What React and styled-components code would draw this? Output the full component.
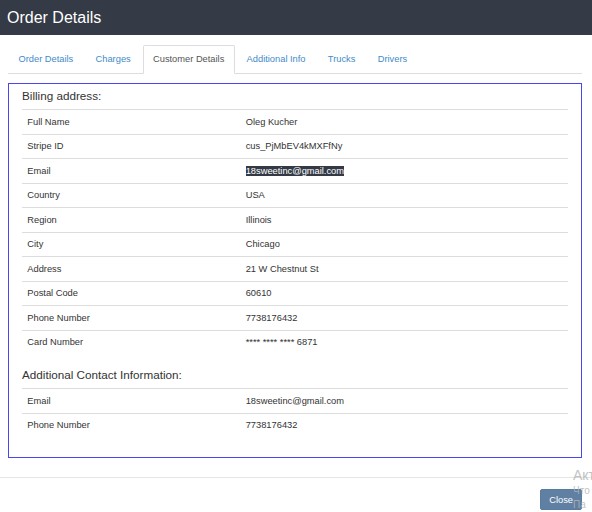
import React from "react";
import styled, { createGlobalStyle } from "styled-components";

const GlobalStyle = createGlobalStyle`
  html, body {
    margin: 0;
    padding: 0;
    background: #fff;
    font-family: "Liberation Sans", Arial, sans-serif;
    color: #333;
  }
`;

const Page = styled.div`
  position: relative;
  width: 592px;
  height: 512px;
  overflow: hidden;
  background: #fff;
`;

const Header = styled.div`
  height: 35px;
  background-color: #343a46;
  display: flex;
  align-items: center;
  padding-left: 7px;
`;

const Title = styled.h4`
  margin: 0;
  font-size: 16px;
  font-weight: 400;
  color: #fff;
`;

const Body = styled.div`
  padding: 10px 10px 0 8px;
`;

const Tabs = styled.ul`
  display: flex;
  list-style: none;
  margin: 0;
  padding: 0;
  border-bottom: 1px solid #ddd;
`;

const Tab = styled.li`
  margin-right: 1.3px;
  margin-bottom: -1px;
  padding: 6.7px 9.5px;
  font-size: 9.3px;
  line-height: 13.3px;
  border: 1px solid ${(p) => (p.$active ? "#ddd" : "transparent")};
  border-bottom-color: ${(p) => (p.$active ? "#fff" : "transparent")};
  border-radius: 2px 2px 0 0;
  background: ${(p) => (p.$active ? "#fff" : "transparent")};
  color: ${(p) => (p.$active ? "#555" : "#428bca")};
`;

const Panel = styled.div`
  margin-top: 9.5px;
  border: 1px solid #4646f5;
  padding: 4.5px 13px 6.5px;
`;

const Heading = styled.h4`
  margin: 0 0 7.6px;
  font-size: 11.7px;
  line-height: 13px;
  font-weight: 400;
  color: #333;
`;

const Table = styled.table`
  width: 100%;
  border-collapse: collapse;
  margin-bottom: 13.4px;
  font-size: 9.3px;
`;

const Cell = styled.td`
  padding: 5.25px 5.3px;
  line-height: 13px;
  border-top: 1px solid #ddd;
  vertical-align: top;
  width: ${(p) => (p.$label ? "40%" : "auto")};
`;

const Selected = styled.span`
  background: #333a45;
  color: #fff;
`;

const Footer = styled.div`
  margin-top: 19px;
  border-top: 1px solid #e5e5e5;
  padding: 11px 10px 0;
  display: flex;
  justify-content: flex-end;
`;

const CloseButton = styled.button`
  height: 21px;
  padding: 0 8px;
  border: 1px solid #587ba0;
  border-radius: 2px;
  background: #5f80a3;
  color: #fff;
  font-family: "Liberation Sans", Arial, sans-serif;
  font-size: 9.3px;
`;

const Watermark = styled.div`
  position: absolute;
  left: 573px;
  top: 468px;
  color: #b4b4b4;
  font-family: "Liberation Sans", Arial, sans-serif;
  line-height: 1;
  white-space: nowrap;
  pointer-events: none;
`;

const WatermarkLine = styled.div`
  font-size: ${(p) => p.$size}px;
  margin-bottom: ${(p) => p.$gap || 0}px;
  opacity: 0.8;
`;

const billing = [
  ["Full Name", "Oleg Kucher"],
  ["Stripe ID", "cus_PjMbEV4kMXFfNy"],
  ["Email", "18sweetinc@gmail.com", true],
  ["Country", "USA"],
  ["Region", "Illinois"],
  ["City", "Chicago"],
  ["Address", "21 W Chestnut St"],
  ["Postal Code", "60610"],
  ["Phone Number", "7738176432"],
  ["Card Number", "**** **** **** 6871"],
];

const contact = [
  ["Email", "18sweetinc@gmail.com"],
  ["Phone Number", "7738176432"],
];

const tabs = [
  "Order Details",
  "Charges",
  "Customer Details",
  "Additional Info",
  "Trucks",
  "Drivers",
];

const InfoTable = ({ rows }) => (
  <Table>
    <tbody>
      {rows.map(([label, value, selected]) => (
        <tr key={label}>
          <Cell $label>{label}</Cell>
          <Cell>{selected ? <Selected>{value}</Selected> : value}</Cell>
        </tr>
      ))}
    </tbody>
  </Table>
);

const App = () => {
  return (
    <Page>
      <GlobalStyle />
      <Header>
        <Title>Order Details</Title>
      </Header>
      <Body>
        <Tabs>
          {tabs.map((t) => (
            <Tab key={t} $active={t === "Customer Details"}>
              {t}
            </Tab>
          ))}
        </Tabs>
        <Panel>
          <Heading>Billing address:</Heading>
          <InfoTable rows={billing} />
          <Heading>Additional Contact Information:</Heading>
          <InfoTable rows={contact} />
        </Panel>
      </Body>
      <Footer>
        <CloseButton>Close</CloseButton>
      </Footer>
      <Watermark>
        <WatermarkLine $size={14} $gap={4}>Акт</WatermarkLine>
        <WatermarkLine $size={10} $gap={4}>Что</WatermarkLine>
        <WatermarkLine $size={10}>Па</WatermarkLine>
      </Watermark>
    </Page>
  );
};

export default App;
